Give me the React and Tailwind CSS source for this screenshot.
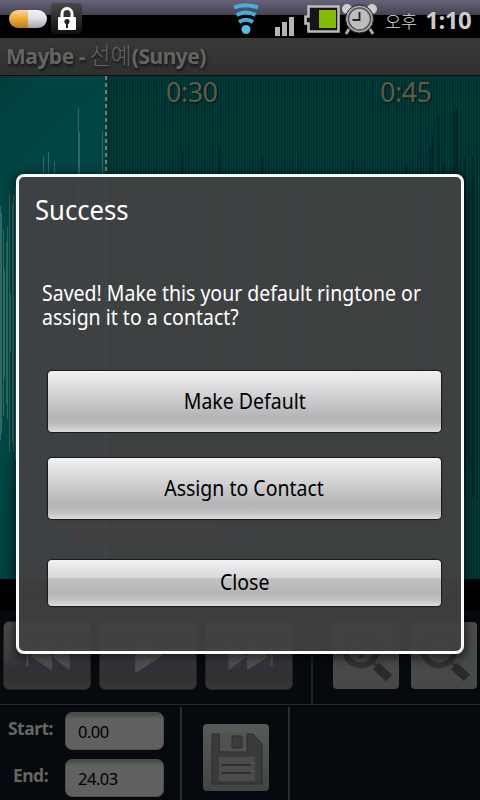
import React from "react";

const seekBars = [
  [0, 206, 440], [1, 213, 433], [3, 230, 416], [4, 269, 377], [6, 242, 404],
  [7, 227, 419], [9, 194, 452], [10, 294, 352], [12, 204, 442], [13, 194, 452],
  [15, 186, 460],
];

const peakBars = [
  [43, 156], [48, 152], [54, 162], [78, 108], [79, 132], [102, 131],
];

const darkBars = [
  [154, 168], [182, 152], [219, 146], [262, 156], [298, 155], [352, 160],
  [406, 165], [417, 158], [420, 119], [423, 150], [430, 147], [432, 135],
  [438, 116], [443, 162], [450, 163], [454, 111], [456, 108], [460, 160],
  [464, 158], [465, 180], [468, 205], [472, 156], [474, 236], [477, 155],
];

function Waveform() {
  return (
    <svg width="480" height="503" className="absolute inset-0" shapeRendering="crispEdges">
      <defs>
        <linearGradient id="sel" x1="0" y1="0" x2="0.2" y2="1">
          <stop offset="0" stopColor="#013c3a" />
          <stop offset="0.1" stopColor="#014443" />
          <stop offset="0.7" stopColor="#004845" />
          <stop offset="1" stopColor="#003f3e" />
        </linearGradient>
        <pattern id="grid" width="8" height="8" patternUnits="userSpaceOnUse">
          <rect width="8" height="8" fill="#012f2d" />
          <path d="M0 0h1v8h-1zM3 0h1v8h-1zM6 0h1v8h-1z" fill="#00413d" />
        </pattern>
      </defs>
      <rect width="106" height="503" fill="url(#sel)" />
      <rect x="106" width="374" height="503" fill="url(#grid)" />
      {seekBars.map(([x, top, bottom]) => (
        <rect key={x} x={x} y={top - 76} width="1" height={bottom - top} fill="#2f6a65" />
      ))}
      {peakBars.map(([x, top]) => (
        <rect key={x} x={x} y={top - 76} width="1" height="120" fill="#2f6a65" />
      ))}
      {darkBars.map(([x, top]) => (
        <rect key={x} x={x} y={top - 76} width="1" height={(327 - top) * 2} fill="#02232a" />
      ))}
      <rect x="74" y="390" width="138" height="72" rx="6" fill="#3a2420" stroke="#6b2a1c" strokeWidth="5" />
      <line x1="106" x2="106" y1="0" y2="503" stroke="#777" strokeWidth="2" strokeDasharray="4 3" />
    </svg>
  );
}

function StatusBar() {
  return (
    <div className="flex h-[38px] shrink-0 items-start bg-[linear-gradient(#66627a_0px,#45424f_15px,#000_15px)]">
      <div className="ml-[9px] mt-[10px] h-[18px] w-[38px] rounded-full bg-[linear-gradient(#fff8_0%,#fff0_45%,#0004_100%),linear-gradient(90deg,#f2ae33_50%,#dfe2e6_50%)]" />
      <div className="ml-[4px] mt-[3px] flex h-[31px] w-[31px] items-center justify-center rounded-[4px] bg-linear-to-b from-[#484848] to-[#101010]">
        <svg width="20" height="24" viewBox="0 0 20 24">
          <path d="M5 11V6.500a5 5 0 0 1 10 0V11" fill="none" stroke="#fff" strokeWidth="3" />
          <rect x="1" y="10" width="18" height="13" rx="1" fill="#fff" />
          <circle cx="10" cy="14.500" r="2.600" fill="#222" />
          <path d="M9 15h2v6h-2z" fill="#222" />
        </svg>
      </div>
      <svg width="26" height="32" viewBox="0 0 26 32" className="ml-[151px] mt-[3px]">
        <g fill="none" stroke="#42b0dc" strokeWidth="4">
          <path d="M1 4.500q11.500-4.500 24 0" />
          <path d="M3.500 12q9.500-5 19 0" />
          <path d="M6 19q7-4.500 14 0" />
        </g>
        <circle cx="13" cy="26.500" r="4.500" fill="#55bfe6" />
      </svg>
      <svg width="20" height="20" viewBox="0 0 20 20" className="ml-[16px] mt-[16px]">
        <g fill="#b5b5b5">
          <rect x="0" y="11" width="5" height="9" />
          <rect x="7" y="6" width="5" height="14" />
          <rect x="14" y="1" width="5" height="19" />
        </g>
      </svg>
      <svg width="37" height="30" viewBox="0 0 37 30" className="ml-[9px] mt-[4px]">
        <path d="M4.500 2.500h30v25h-30v-8h-3v-7h3z" fill="#151515" stroke="#bbb" strokeWidth="2.600" />
        <rect x="15" y="6" width="17" height="18" fill="#84bd00" />
      </svg>
      <svg width="37" height="32" viewBox="0 0 37 32" className="mt-[3px]">
        <g fill="#ccc">
          <circle cx="6" cy="6" r="5" />
          <circle cx="31" cy="6" r="5" />
        </g>
        <path d="M8 26l-3 5M29 26l3 5" stroke="#aaa" strokeWidth="3" />
        <circle cx="18.500" cy="16" r="14" fill="#aaa" stroke="#222" strokeWidth="1" />
        <circle cx="18.500" cy="16" r="11" fill="#bdbdbd" stroke="#555" strokeWidth="1.500" />
        <path d="M18.500 9v8h-7" fill="none" stroke="#222" strokeWidth="1.800" />
      </svg>
      <span className="ml-[7px] mt-[9px] font-['Noto_Sans_CJK_KR',sans-serif] text-[17.500px] font-light leading-[24px] text-[#d8d8d8]">오후</span>
      <span className="ml-[8px] mt-[4px] text-[24px] font-bold leading-[32px] tracking-[-0.5px] text-[#cbcbcb]">1:10</span>
    </div>
  );
}

function MediaButton({ children, className }) {
  return (
    <div className={`h-[69px] rounded-[6px] border border-[#222] bg-[linear-gradient(#4b4c4b_0%,#3f403f_45%,#303138_70%,#31302f_85%,#393939_100%)] ${className}`}>
      <svg width="100%" height="100%" viewBox="0 0 86 68">
        <defs>
          <linearGradient id="glyph" x1="0" y1="0" x2="0" y2="1">
            <stop offset="0.3" stopColor="#5e5f5e" />
            <stop offset="1" stopColor="#484a49" />
          </linearGradient>
        </defs>
        <g fill="url(#glyph)">{children}</g>
      </svg>
    </div>
  );
}

function ZoomButton({ plus, className }) {
  return (
    <div className={`h-[67px] w-[66px] rounded-[4px] bg-linear-to-b from-[#4b4d4b] to-[#454846] ${className}`}>
      <svg width="66" height="67" viewBox="0 0 66 67">
        <circle cx="28" cy="28" r="15.500" fill="none" stroke="#313332" strokeWidth="6" />
        <path d="M38 38l6 6" stroke="#313332" strokeWidth="3" />
        <path d="M43 44l13 12" stroke="#292b2a" strokeWidth="9" />
        {plus && <path d="M28 20v16M20 28h16" stroke="#313332" strokeWidth="4" />}
      </svg>
    </div>
  );
}

function Field({ label, value }) {
  return (
    <div className="flex h-[38px] items-center">
      <span className="-mt-[6px] w-[57px] pl-[4px] text-center text-[17.500px] font-bold leading-[22px] tracking-[-0.5px] text-[#646664]">
        {label}
      </span>
      <div className="ml-[8px] h-[38px] w-[99px] rounded-[7px] border border-[#4b4e4b] bg-[linear-gradient(#444744_0px,#606260_6px,#606060_100%)] pl-[12px] text-[16.500px] leading-[37px] tracking-[-0.5px] text-black">
        {value}
      </div>
    </div>
  );
}

function DialogButton({ children, className }) {
  return (
    <button className={`block w-[393px] rounded-[4px] text-[21px] text-black shadow-[0_0_1px_1px_#181818] ${className}`}>
      <span className="inline-block scale-x-[0.928]">{children}</span>
    </button>
  );
}

function Dialog() {
  return (
    <div className="absolute left-[16px] top-[174px] h-[480px] w-[448px] rounded-[8px] border-3 border-[#f8fcf8] bg-linear-to-b from-[#424143]/93 from-80% to-[#414141]/95 text-white shadow-[0_2px_8px_3px_rgba(0,0,0,0.5)]">
      <h1 className="ml-[16px] mt-[14px] origin-left scale-x-[0.95] text-[27px] leading-[37px]">Success</h1>
      <div className="ml-[23px] mt-[53px] origin-left scale-x-[0.928] whitespace-nowrap text-[21px] leading-[24px]">
        <p>Saved! Make this your default ringtone or</p>
        <p>assign it to a contact?</p>
      </div>
      <div className="ml-[29px]">
        <DialogButton className="mt-[42px] h-[61px] bg-[linear-gradient(#f1f0f2_0%,#e0dfe1_22%,#cbcacc_48%,#b5b4b6_75%,#b9b8ba_85%,#dcdcdc_100%)]">
          Make Default
        </DialogButton>
        <DialogButton className="mt-[26px] h-[61px] bg-[linear-gradient(#f1f0f2_0%,#e0dfe1_22%,#cbcacc_48%,#b5b4b6_75%,#b9b8ba_85%,#dcdcdc_100%)]">
          Assign to Contact
        </DialogButton>
        <DialogButton className="mt-[41px] h-[46px] bg-[linear-gradient(#f1f0f2_0%,#d8d7d9_39%,#c2c1c3_40%,#b5b4b6_72%,#c4c4c5_88%,#dcdcdc_100%)]">
          Close
        </DialogButton>
      </div>
    </div>
  );
}

export default function App() {
  return (
    <div className="relative flex h-[800px] w-[480px] flex-col overflow-hidden bg-black font-['Noto_Sans','Noto_Sans_CJK_KR',sans-serif]">
      <StatusBar />
      <div className="h-[38px] shrink-0 border-b border-[#111] bg-linear-to-b from-[#383a38] to-[#2f302e] pl-[6px] text-[21px] font-bold leading-[35px] tracking-[-0.5px] text-[#636563] [text-shadow:1px_2px_3px_#111]">
        Maybe - <span className="text-[22.500px] font-light tracking-[0.3px]">선예</span>(Sunye)
      </div>

      <div className="relative h-[503px] shrink-0">
        <Waveform />
        <div className="relative flex pl-[166px] text-[27px] leading-[32px] tracking-[-0.5px] text-[#5b5d4c] [text-shadow:1px_1px_2px_#111]">
          <span className="w-[214px]">0:30</span>
          <span>0:45</span>
        </div>
      </div>

      {/* Playback controls */}
      <div className="mt-[32px] flex h-[93px] shrink-0 bg-[#06090d] pt-[10px]">
        <MediaButton className="ml-[3px] w-[88px]">
          <path d="M22 20h2v25h-2zM48 20v29L26 35zM66 20v29L48 35z" />
        </MediaButton>
        <MediaButton className="ml-[8px] w-[98px]">
          <path d="M30 17l28 17-28 18z" />
        </MediaButton>
        <MediaButton className="ml-[8px] w-[88px]">
          <path d="M65 20h2v25h-2zM22 20v29l19-14zM41 20v29l22-14z" />
        </MediaButton>
        <div className="-mt-[10px] ml-[18px] w-[2px] bg-[#222]" />
        <ZoomButton plus className="ml-[20px] mt-px" />
        <ZoomButton className="ml-[12px] mt-px" />
      </div>

      <div className="flex grow border-t border-[#292929] bg-[#06090d] pt-[2px]">
        <div className="flex w-[180px] flex-col gap-[9px] pt-[5px]">
          <Field label="Start:" value="0.00" />
          <Field label="End:" value="24.03" />
        </div>
        <div className="w-[2px] bg-[#2b2a2c]" />
        <div className="w-[106px] pl-[21px] pt-[17px]">
          <div className="h-[67px] w-[66px] rounded-[4px] bg-linear-to-b from-[#585a58] to-[#424542]">
            <svg width="66" height="67" viewBox="0 0 66 67">
              <path d="M9 10h8v18h27V10h6l9 10v40H9z" fill="#383b39" stroke="#2b2e2c" strokeWidth="1" />
              <path d="M17 9h26v18H17z" fill="#505250" />
              <path d="M29 12h10v12h-10z" fill="#3a3d3b" stroke="#2b2e2c" strokeWidth="1" />
              <path d="M16 33h36v24H16z" fill="#4a4d4a" />
              <path d="M19 41h29M19 49h29" stroke="#2d302e" strokeWidth="2" />
            </svg>
          </div>
        </div>
        <div className="w-[2px] bg-[#2b2a2c]" />
      </div>

      <Dialog />
    </div>
  );
}
